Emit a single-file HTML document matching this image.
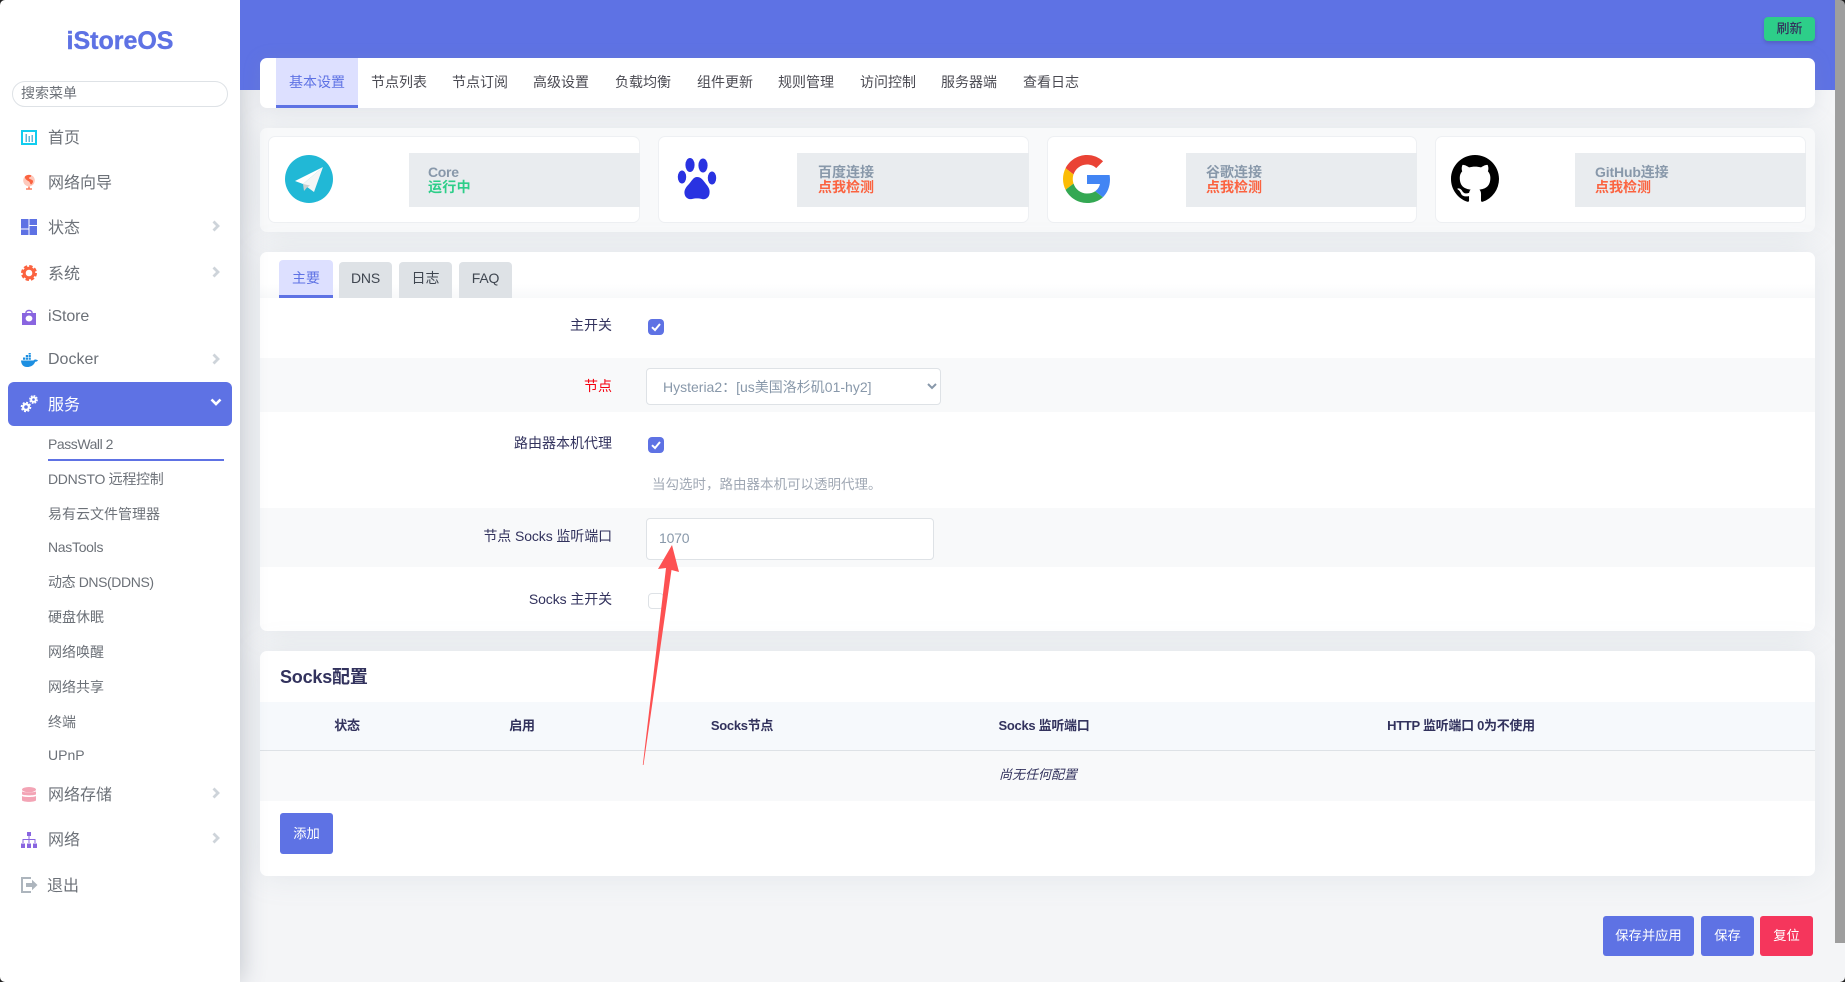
<!DOCTYPE html>
<html lang="zh-CN">
<head>
<meta charset="utf-8">
<title>iStoreOS - PassWall 2</title>
<style>
html,body{margin:0;padding:0;width:1845px;height:982px;overflow:hidden;background:#f4f5f7}
body{position:relative;font-family:"Liberation Sans","Noto Sans CJK SC",sans-serif;font-size:14px;color:#32325d}
*{box-sizing:border-box}
.a{position:absolute}
.t{position:absolute;white-space:nowrap;line-height:20px}
.r{text-align:right;width:300px;left:312px;color:#32325d}
.m{left:48px;font-size:16px;color:#6c7178}
.s{left:48px;font-size:14px;color:#6c7178}
.n{color:#4a4a52;top:72px}
.card{position:absolute;left:260px;width:1555px;background:#fff;border-radius:7px;box-shadow:0 0 32px rgba(136,152,170,.15)}
.st{position:absolute;top:136px;height:87px;background:#fff;border:1px solid #eef0f3;border-radius:7px}
.gr{position:absolute;top:153px;height:54px;background:#e9ecef}
.c1{font-weight:600;color:#8898aa}
.c2{font-weight:600;color:#fb6340}
.h{top:716px;font-size:13px;font-weight:600;color:#32325d;transform:translateX(-50%);letter-spacing:-.3px}
.btn{position:absolute;background:#5e72e4;color:#fff;border-radius:3px;text-align:center;font-size:13.3px}
.cb{position:absolute;left:648px;width:16px;height:16px;border-radius:4px;background:#5e72e4}
svg{position:absolute;overflow:visible}
</style>
</head>
<body>

<!-- main header -->
<div class="a" style="left:240px;top:0;width:1605px;height:90px;background:#5e72e4;z-index:2"></div>
<div class="a" style="left:1764px;top:17px;width:51px;height:24px;background:#2dce89;border-radius:4px;text-align:center;line-height:24px;font-size:13px;font-weight:500;color:#32325d;z-index:3;box-shadow:0 2px 3px rgba(50,50,93,.25)">刷新</div>

<!-- sidebar -->
<div class="a" style="left:0;top:0;width:240px;height:982px;background:#fff;box-shadow:0 0 24px rgba(60,70,90,.3);z-index:1"></div>
<div style="position:absolute;left:0;top:0;width:240px;height:982px;z-index:4">
  <div class="t" style="left:0;width:240px;text-align:center;top:26px;line-height:30px;font-size:25px;font-weight:700;color:#5e72e4;-webkit-text-stroke:.4px #5e72e4">iStoreOS</div>
  <div class="a" style="left:12px;top:81px;width:216px;height:26px;border:1px solid #dee2e6;border-radius:13px"></div>
  <div class="t" style="left:21px;top:83px;color:#6c7178;font-size:14px">搜索菜单</div>

  <svg style="left:21px;top:130px" width="16" height="15" viewBox="0 0 16 15"><rect x="1" y="1" width="14" height="13" fill="none" stroke="#11cdef" stroke-width="2"/><path d="M4.500 4h1.500v8H4.500zM7.500 6h1.500v6H7.500zM10.500 5h1.500v7h-1.500z" fill="#5fb7d8"/></svg>
  <div class="t m" style="top:129px">首页</div>

  <svg style="left:22px;top:174px" width="15" height="16" viewBox="0 0 15 16"><circle cx="7" cy="6.500" r="5.800" fill="#fb6340" opacity=".35"/><path d="M3 2.500c1.500-1.500 4-2 6-1.200.8 1-.5 2-2 2.200-.5 1.500 1.800 1.800 3.200 2.500 1.500 1 .8 3.300-1 4.500-1.500-.5-1-2.500-2.500-3.200C4.800 6 2.500 5 3 2.500z" fill="#fb6340"/><path d="M7 12.500v1.800M4 15h6" stroke="#fb6340" stroke-width="1.300" fill="none"/></svg>
  <div class="t m" style="top:174px">网络向导</div>

  <svg style="left:21px;top:219px" width="16" height="16" viewBox="0 0 16 16" fill="#5e72e4"><rect width="7.500" height="9.500"/><rect x="8.500" width="7.500" height="6"/><rect y="10.500" width="7.500" height="5.500"/><rect x="8.500" y="7" width="7.500" height="9"/></svg>
  <div class="t m" style="top:219px">状态</div>
  <svg style="left:212px;top:220px" width="8" height="12" viewBox="0 0 8 12"><path d="M1.500 1.500 6 6l-4.500 4.500" fill="none" stroke="#ced4da" stroke-width="2.800"/></svg>

  <svg style="left:21px;top:265px" width="16" height="16" viewBox="0 0 16 16"><circle cx="8" cy="8" r="4.800" fill="none" stroke="#fb6340" stroke-width="3"/><circle cx="8" cy="8" r="6.900" fill="none" stroke="#fb6340" stroke-width="2.200" stroke-dasharray="3.400 2.020"/></svg>
  <div class="t m" style="top:265px">系统</div>
  <svg style="left:212px;top:266px" width="8" height="12" viewBox="0 0 8 12"><path d="M1.500 1.500 6 6l-4.500 4.500" fill="none" stroke="#ced4da" stroke-width="2.800"/></svg>

  <svg style="left:22px;top:310px" width="14" height="15" viewBox="0 0 14 15"><path d="M0 3h14v12H0z" fill="#8965e0"/><path d="M4 4V2.500a3 2 0 0 1 6 0V4" stroke="#8965e0" stroke-width="1.400" fill="none"/><ellipse cx="7" cy="8.500" rx="3.400" ry="3" fill="#fff"/></svg>
  <div class="t m" style="top:307px;letter-spacing:-.1px">iStore</div>

  <svg style="left:21px;top:354px" width="17" height="13" viewBox="0 0 17 13"><path d="M0 6.500h12.500c.5-1 1.800-1.300 3-.8l1.500.6c-.6 1.200-1.800 1.500-2.800 1.400C13 11 10 13 6 13 2 13 .2 10 0 6.500z" fill="#1d8fe1"/><path d="M2 3.500h2.200v2.300H2zM4.800 3.500H7v2.300H4.800zM7.600 3.500h2.200v2.300H7.600zM4.800 1h2.200v2H4.800zM7.600 1h2.200v2H7.600zM7.600-1h2.200v1.500H7.600z" fill="#1d8fe1"/></svg>
  <div class="t m" style="top:350px">Docker</div>
  <svg style="left:212px;top:353px" width="8" height="12" viewBox="0 0 8 12"><path d="M1.500 1.500 6 6l-4.500 4.500" fill="none" stroke="#ced4da" stroke-width="2.800"/></svg>

  <div class="a" style="left:8px;top:382px;width:224px;height:44px;background:#5e72e4;border-radius:6px"></div>
  <svg style="left:21px;top:395px" width="17" height="17" viewBox="0 0 17 17"><circle cx="5" cy="12" r="2.900" fill="none" stroke="#fff" stroke-width="2.200"/><circle cx="5" cy="12" r="4.600" fill="none" stroke="#fff" stroke-width="1.400" stroke-dasharray="2 1.600"/><circle cx="12.500" cy="4.500" r="2.300" fill="none" stroke="#fff" stroke-width="2"/><circle cx="12.500" cy="4.500" r="3.800" fill="none" stroke="#fff" stroke-width="1.200" stroke-dasharray="1.800 1.180"/></svg>
  <div class="t m" style="top:396px;color:#fff">服务</div>
  <svg style="left:210px;top:398px" width="12" height="8" viewBox="0 0 12 8"><path d="M1.500 1.500 6 6l4.500-4.500" fill="none" stroke="#fff" stroke-width="2.600"/></svg>

  <div class="t s" style="top:434px;letter-spacing:-.45px">PassWall 2</div>
  <div class="a" style="left:48px;top:459px;width:176px;height:2px;background:#5e72e4"></div>
  <div class="t s" style="top:469px;left:48px;letter-spacing:-.3px">DDNSTO 远程控制</div>
  <div class="t s" style="top:504px">易有云文件管理器</div>
  <div class="t s" style="top:537px;letter-spacing:-.3px">NasTools</div>
  <div class="t s" style="top:572px;letter-spacing:-.4px">动态 DNS(DDNS)</div>
  <div class="t s" style="top:607px">硬盘休眠</div>
  <div class="t s" style="top:642px">网络唤醒</div>
  <div class="t s" style="top:677px">网络共享</div>
  <div class="t s" style="top:712px">终端</div>
  <div class="t s" style="top:745px">UPnP</div>

  <svg style="left:22px;top:787px" width="14" height="16" viewBox="0 0 14 16" fill="#f3a4b5"><ellipse cx="7" cy="2.600" rx="7" ry="2.600"/><path d="M0 4.400c1.500 1.300 12.500 1.300 14 0v3c-1.500 1.300-12.500 1.300-14 0zM0 9c1.500 1.300 12.500 1.300 14 0v4.400c-1.500 2-12.500 2-14 0z"/></svg>
  <div class="t m" style="top:786px">网络存储</div>
  <svg style="left:212px;top:787px" width="8" height="12" viewBox="0 0 8 12"><path d="M1.500 1.500 6 6l-4.500 4.500" fill="none" stroke="#ced4da" stroke-width="2.800"/></svg>

  <svg style="left:21px;top:832px" width="16" height="16" viewBox="0 0 16 16"><path d="M6 0h4v4H6zM0 11.500h4V16H0zM6 11.500h4V16H6zM12 11.500h4V16h-4z" fill="#8965e0"/><path d="M8 4v7M2 11V7.500h12V11" fill="none" stroke="#8965e0" stroke-width="1"/></svg>
  <div class="t m" style="top:831px">网络</div>
  <svg style="left:212px;top:832px" width="8" height="12" viewBox="0 0 8 12"><path d="M1.500 1.500 6 6l-4.500 4.500" fill="none" stroke="#ced4da" stroke-width="2.800"/></svg>

  <svg style="left:21px;top:877px" width="17" height="16" viewBox="0 0 17 16"><path d="M10 1H1v14h9" fill="none" stroke="#adb5bd" stroke-width="2"/><path d="M5 6h6V2.800L16.500 8 11 13.200V10H5z" fill="#adb5bd"/></svg>
  <div class="t m" style="top:877px;left:47px">退出</div>
</div>

<!-- top tabs -->
<div class="card" style="top:58px;height:50px;z-index:3;box-shadow:0 2px 18px rgba(136,152,170,.18)">
  <div class="a" style="left:16px;top:0;width:82px;height:50px;background:#dde0ff;border-bottom:3px solid #5e72e4"></div>
</div>
<div style="position:absolute;left:0;top:0;z-index:4">
  <div class="t n" style="left:289px;color:#5e72e4">基本设置</div>
  <div class="t n" style="left:371px">节点列表</div>
  <div class="t n" style="left:452px">节点订阅</div>
  <div class="t n" style="left:533px">高级设置</div>
  <div class="t n" style="left:615px">负载均衡</div>
  <div class="t n" style="left:697px">组件更新</div>
  <div class="t n" style="left:778px">规则管理</div>
  <div class="t n" style="left:860px">访问控制</div>
  <div class="t n" style="left:941px">服务器端</div>
  <div class="t n" style="left:1023px">查看日志</div>
</div>

<!-- status -->
<div class="card" style="top:128px;height:104px;background:#f8f9fa"></div>
<div class="st" style="left:268px;width:372px"></div>
<div class="st" style="left:658px;width:371px"></div>
<div class="st" style="left:1047px;width:370px"></div>
<div class="st" style="left:1435px;width:371px"></div>
<div class="gr" style="left:409px;width:231px"></div>
<div class="gr" style="left:797px;width:232px"></div>
<div class="gr" style="left:1186px;width:231px"></div>
<div class="gr" style="left:1575px;width:231px"></div>

<svg style="left:285px;top:155px" width="48" height="48" viewBox="0 0 48 48"><circle cx="24" cy="24" r="24" fill="#21b8d6"/><path d="M38 12 10 26l8 3z" fill="#fff"/><path d="M38 12 18 29l11 8z" fill="#f4f6f6"/><path d="M18 29l1 7 3-3.500 3-2z" fill="#c9cfcf"/></svg>
<svg style="left:678px;top:158px" width="39" height="42" viewBox="0 0 39 42" fill="#2932e1"><ellipse cx="12" cy="7" rx="4.600" ry="7"/><ellipse cx="25" cy="7.500" rx="4.600" ry="7"/><ellipse cx="4" cy="19" rx="4.200" ry="6.500"/><ellipse cx="34" cy="20" rx="4.200" ry="6.500"/><path d="M19 19c4 0 6 3 9 7 3 3.500 4 6 3.500 9.500C31 40 27 42 24 41c-3-.8-7-.8-10 0-3 .8-7-1-7.500-5.500C6 32 8 29 11 26c3-3.500 4.500-7 8-7z"/></svg>
<svg style="left:1063px;top:155px" width="48" height="48" viewBox="0 0 48 48"><path fill="#EA4335" d="M24 9.500c3.540 0 6.710 1.220 9.210 3.600l6.850-6.850C35.900 2.380 30.470 0 24 0 14.620 0 6.510 5.380 2.560 13.220l7.980 6.190C12.430 13.720 17.740 9.500 24 9.500z"/><path fill="#4285F4" d="M46.980 24.550c0-1.570-.15-3.090-.38-4.550H24v9.020h12.940c-.58 2.960-2.260 5.480-4.780 7.180l7.730 6c4.510-4.180 7.090-10.360 7.090-17.650z"/><path fill="#FBBC05" d="M10.530 28.590c-.48-1.450-.76-2.990-.76-4.590s.27-3.140.76-4.590l-7.980-6.190C.92 16.460 0 20.120 0 24c0 3.880.92 7.540 2.560 10.780l7.970-6.190z"/><path fill="#34A853" d="M24 48c6.480 0 11.930-2.130 15.890-5.810l-7.730-6c-2.150 1.450-4.920 2.300-8.160 2.300-6.260 0-11.570-4.220-13.470-9.910l-7.980 6.190C6.510 42.620 14.620 48 24 48z"/></svg>
<svg style="left:1451px;top:155px" width="48" height="48" viewBox="0 0 16 16"><path fill="#000" d="M8 0C3.580 0 0 3.580 0 8c0 3.540 2.290 6.530 5.470 7.590.4.070.55-.17.55-.38 0-.19-.01-.82-.01-1.490-2.010.37-2.530-.49-2.690-.94-.09-.23-.48-.94-.82-1.130-.28-.15-.68-.52-.01-.53.63-.01 1.080.58 1.230.82.720 1.210 1.870.87 2.330.66.070-.52.28-.87.51-1.070-1.780-.2-3.640-.89-3.640-3.950 0-.87.31-1.590.82-2.150-.08-.2-.36-1.020.08-2.120 0 0 .67-.21 2.200.82.64-.18 1.320-.27 2-.27.68 0 1.360.09 2 .27 1.530-1.040 2.200-.82 2.200-.82.44 1.100.16 1.920.08 2.120.51.56.82 1.270.82 2.150 0 3.070-1.870 3.750-3.650 3.950.29.25.54.73.54 1.480 0 1.070-.01 1.930-.01 2.200 0 .21.15.46.55.38A8.013 8.013 0 0 0 16 8c0-4.420-3.580-8-8-8z"/></svg>

<div class="t c1" style="left:428px;top:162px;letter-spacing:-.3px">Core</div>
<div class="t" style="left:428px;top:177px;font-weight:600;color:#2dce89;letter-spacing:.3px">运行中</div>
<div class="t c1" style="left:818px;top:162px">百度连接</div>
<div class="t c2" style="left:818px;top:177px">点我检测</div>
<div class="t c1" style="left:1206px;top:162px">谷歌连接</div>
<div class="t c2" style="left:1206px;top:177px">点我检测</div>
<div class="t c1" style="left:1595px;top:162px;letter-spacing:-.15px">GitHub连接</div>
<div class="t c2" style="left:1595px;top:177px">点我检测</div>

<!-- form card -->
<div class="card" style="top:252px;height:379px"></div>
<div class="a" style="left:260px;top:284px;width:1555px;height:14px;background:linear-gradient(#fff,#f8f9fa)"></div>
<div class="a" style="left:279px;top:260px;width:54px;height:38px;background:#dde0ff;border-bottom:3px solid #5e72e4;border-radius:4px 4px 0 0;text-align:center;line-height:36px;color:#5e72e4">主要</div>
<div class="a" style="left:339px;top:262px;width:53px;height:36px;background:#dee2e6;border-radius:4px 4px 0 0;text-align:center;line-height:32px;color:#3f4650;letter-spacing:-.2px">DNS</div>
<div class="a" style="left:399px;top:262px;width:53px;height:36px;background:#dee2e6;border-radius:4px 4px 0 0;text-align:center;line-height:32px;color:#3f4650">日志</div>
<div class="a" style="left:459px;top:262px;width:53px;height:36px;background:#dee2e6;border-radius:4px 4px 0 0;text-align:center;line-height:32px;color:#3f4650;letter-spacing:-.2px">FAQ</div>
<div class="a" style="left:260px;top:298px;width:1555px;height:60px;background:#fff"></div>

<div class="a" style="left:260px;top:358px;width:1555px;height:54px;background:#f8f9fa"></div>
<div class="a" style="left:260px;top:508px;width:1555px;height:59px;background:#f8f9fa"></div>

<div class="t r" style="top:315px">主开关</div>
<div class="cb" style="top:319px"><svg width="16" height="16" viewBox="0 0 16 16"><path d="M4 8.200 7 11l5-6" fill="none" stroke="#fff" stroke-width="2"/></svg></div>
<div class="t r" style="top:376px;color:#f5000f">节点</div>
<select class="a" style="left:646px;top:368px;width:295px;height:37px;border:1px solid #dee2e6;border-radius:4px;background:#fff;color:#8898aa;font:14px 'Liberation Sans','Noto Sans CJK SC',sans-serif;padding-left:12px"><option>Hysteria2：[us美国洛杉矶01-hy2]</option></select>
<div class="t r" style="top:433px">路由器本机代理</div>
<div class="cb" style="top:437px"><svg width="16" height="16" viewBox="0 0 16 16"><path d="M4 8.200 7 11l5-6" fill="none" stroke="#fff" stroke-width="2"/></svg></div>
<div class="t" style="left:652px;top:475px;font-size:13.500px;color:#a0a8b4">当勾选时，路由器本机可以透明代理。</div>
<div class="t r" style="top:526px;letter-spacing:-.1px">节点 Socks 监听端口</div>
<input class="a" value="1070" style="left:646px;top:518px;width:288px;height:42px;border:1px solid #dee2e6;border-radius:4px;background:#fff;color:#8898aa;font:14px 'Liberation Sans',sans-serif;padding:0 0 2px 12px;letter-spacing:-.2px">
<div class="t r" style="top:589px;letter-spacing:-.1px">Socks 主开关</div>
<div class="a" style="left:648px;top:593px;width:16px;height:16px;border:1px solid #dee2e6;border-radius:4px;background:#fff"></div>

<!-- socks card -->
<div class="card" style="top:651px;height:225px"></div>
<div class="t" style="left:280px;top:667px;font-size:18px;font-weight:600;color:#32325d;letter-spacing:-.2px">Socks配置</div>
<div class="a" style="left:260px;top:702px;width:1555px;height:49px;background:#f6f9fc;border-bottom:1px solid #dee2e6"></div>
<div class="a" style="left:260px;top:751px;width:1555px;height:50px;background:#f8f9fa"></div>
<div class="t h" style="left:347px">状态</div>
<div class="t h" style="left:522px">启用</div>
<div class="t h" style="left:742px">Socks节点</div>
<div class="t h" style="left:1044px">Socks 监听端口</div>
<div class="t h" style="left:1461px">HTTP 监听端口 0为不使用</div>
<div class="t" style="left:1038px;top:765px;transform:translateX(-50%);font-size:13px;font-style:italic;color:#32325d">尚无任何配置</div>
<div class="btn" style="left:280px;top:813px;width:53px;height:41px;line-height:41px">添加</div>

<!-- bottom buttons -->
<div class="btn" style="left:1603px;top:916px;width:91px;height:40px;line-height:40px">保存并应用</div>
<div class="btn" style="left:1701px;top:916px;width:53px;height:40px;line-height:40px">保存</div>
<div class="btn" style="left:1760px;top:916px;width:53px;height:40px;line-height:40px;background:#f5365c">复位</div>

<!-- scrollbar -->
<div class="a" style="left:1835px;top:0;width:10px;height:982px;background:#f4f5f7;z-index:5"></div>
<div class="a" style="left:1835px;top:0;width:10px;height:943px;background:#9e9e9e;z-index:5"></div>

<!-- arrow annotation -->
<svg style="left:0;top:0;z-index:6" width="1845" height="982"><polygon points="672,545 679,572 671.500,570 643.500,765 642.800,765 666,568 658,569" fill="#fd5152"/></svg>

<!-- window corners -->
<div class="a" style="left:-6px;top:-6px;width:1857px;height:994px;border:6px solid #222;border-radius:11px;z-index:7;pointer-events:none"></div>
</body>
</html>
